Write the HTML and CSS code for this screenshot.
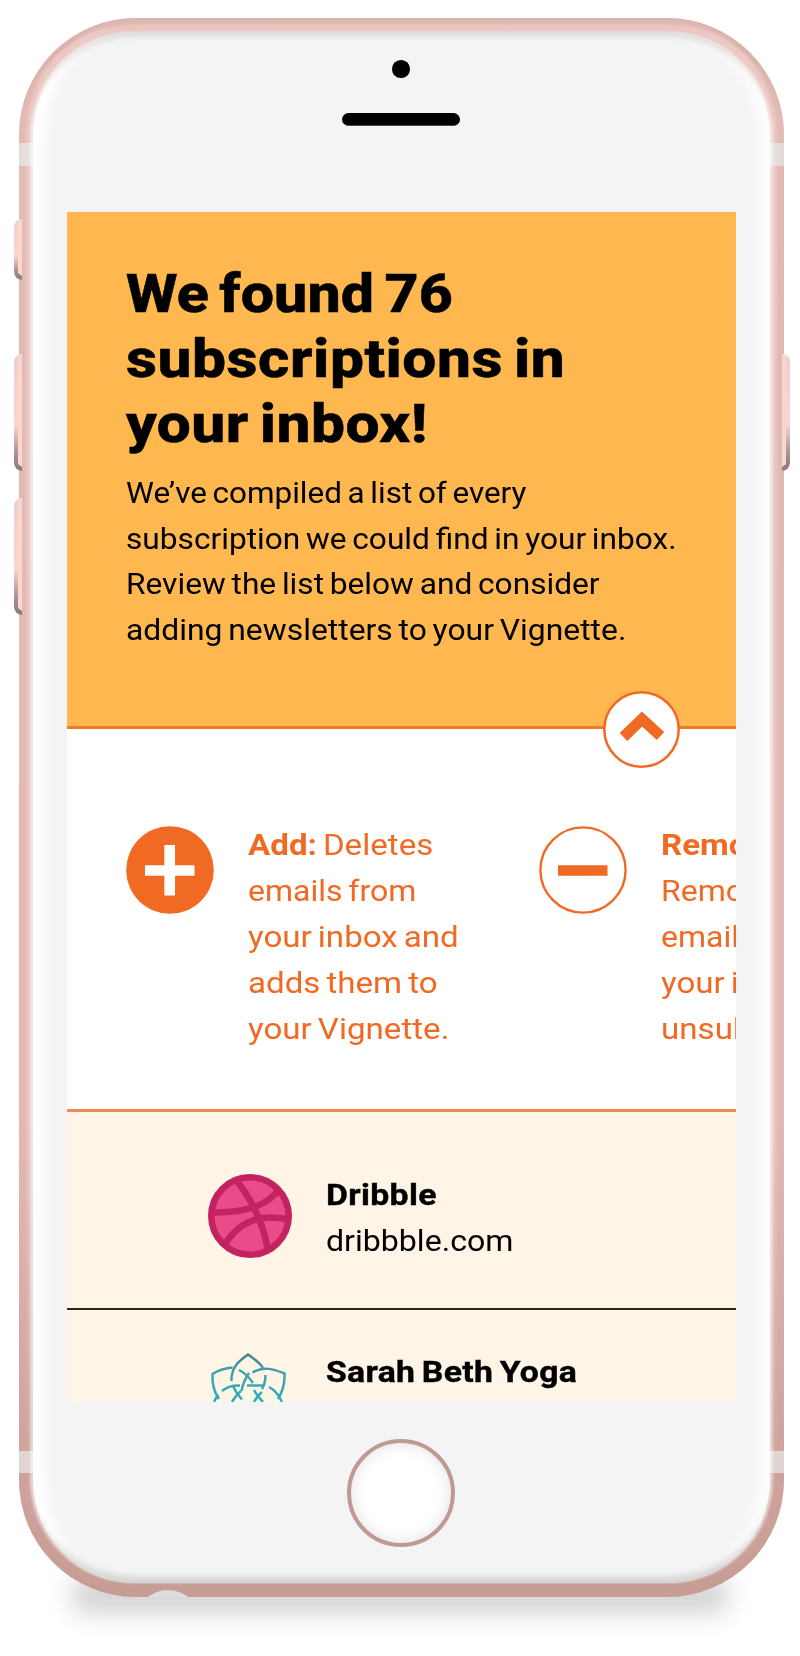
FILE: index.html
```html
<!DOCTYPE html>
<html lang="en">
<head>
<meta charset="utf-8">
<title>Vignette subscriptions</title>
<link rel="stylesheet" href="styles.css">
</head>
<body>
<div class="phone">
  <i class="key key-mute"></i><i class="key key-up"></i><i class="key key-down"></i><i class="key key-power"></i>
  <div class="shell">
    <i class="band band-top"></i><i class="band band-bottom"></i><i class="jack"></i>
    <div class="face">
      <div class="earpiece"><i class="camera"></i><i class="speaker"></i></div>
      <main class="screen">
        <header class="hero">
          <h1><span class="h-a">We found 76</span><span class="h-b">subscriptions in</span><span class="h-c">your inbox!</span></h1>
          <p><span class="p-a">We’ve compiled a list of every</span><span class="p-b">subscription we could find in your inbox.</span><span class="p-c">Review the list below and consider</span><span class="p-d">adding newsletters to your Vignette.</span></p>
          <button class="collapse" aria-label="Collapse">
            <svg width="77" height="77" viewBox="0 0 77 77"><circle cx="38.5" cy="38.5" r="37.2" fill="#fff" stroke="#f16a24" stroke-width="2.5"/><path d="M20.500 46 39 28 57.500 45" fill="none" stroke="#f16a24" stroke-width="11"/></svg>
          </button>
        </header>
        <section class="legend">
          <div class="tool">
            <svg width="88" height="88" viewBox="0 0 88 88"><circle cx="44" cy="44" r="43.800" fill="#f16a24"/><path d="M19 44.500H68.500M43.700 19V69.500" stroke="#fff" stroke-width="10.700"/></svg>
            <p><span class="t-a"><b>Add:</b> Deletes</span><span class="t-b">emails from</span><span class="t-c">your inbox and</span><span class="t-d">adds them to</span><span class="t-e">your Vignette.</span></p>
          </div>
          <div class="tool">
            <svg width="88" height="88" viewBox="0 0 88 88"><circle cx="44" cy="44" r="42.600" fill="#fff" stroke="#f16a24" stroke-width="2.400"/><path d="M19 44.500H68.500" stroke="#f16a24" stroke-width="10.700"/></svg>
            <p><span class="t-a"><b>Remove:</b></span><span class="t-b">Removes</span><span class="t-b">emails from</span><span class="t-d">your inbox and</span><span class="t-e">unsubscribes.</span></p>
          </div>
        </section>
        <section class="list">
          <article class="row">
            <svg class="logo" width="84" height="84" viewBox="0 0 84 84"><circle cx="42" cy="42" r="38.700" fill="#ea4c89"/><g fill="none" stroke="#c32361" stroke-width="6.600"><circle cx="42" cy="42" r="38.700"/><path d="M29 7Q54 39 60 77"/><path d="M5 38.500Q55 39 71 15"/><path d="M16 72Q37 36 81 45.500"/></g></svg>
            <p><b class="n-a">Dribble</b><span class="n-b">dribbble.com</span></p>
          </article>
          <article class="row">
            <svg class="logo lotus" width="84" height="84" viewBox="0 0 84 84">
              <defs><linearGradient id="teal" gradientUnits="userSpaceOnUse" x1="0" y1="0" x2="0" y2="48"><stop offset="0" stop-color="#3f828e"/><stop offset=".45" stop-color="#42a3b2"/><stop offset="1" stop-color="#25b0bb"/></linearGradient></defs>
              <g fill="none" stroke="url(#teal)" stroke-width="2.500"><path d="M23.500 28C23 14 31 8 40 1.500 48 7 52 10 55 15"/><path d="M24.500 14.500C17 15 11 17 4.500 21 4 31 6 39 11 46"/><path d="M44.500 19.500C55 13 66 16 76.500 20.500 77 31 75 38 70 46"/><path d="M31 17Q39 21 45 30"/><path d="M41 20Q35 29 33.500 38"/><path d="M57.500 22Q57.500 30 54 36"/><path d="M14 38Q21 32 32 32.500"/><path d="M39 32.500H56"/><path d="M25 33Q28 40 34 46.500"/><path d="M46 37Q49 43 55 49"/><path d="M61 34Q69 38 74 49"/><path d="M10.500 42Q8 44 6 49"/><path d="M33 38Q29 41 24 49"/><path d="M54 39Q50 42 46 49"/></g>
            </svg>
            <p><b class="n-c">Sarah Beth Yoga</b></p>
          </article>
        </section>
      </main>
      <div class="home"></div>
    </div>
  </div>
</div>
</body>
</html>
```
FILE: styles.css
```css
* { box-sizing: border-box; }
body { margin: 0; height: 1656px; overflow: hidden; background: #fff; font-family: Roboto, "Liberation Sans", sans-serif; color: #000; }
.phone { position: relative; width: 800px; height: 1656px; padding: 18px 16px 59px 19px; }
.phone::before { content: ""; position: absolute; left: 70px; right: 70px; top: 1576px; height: 38px; border-radius: 19px; background: rgba(0, 0, 0, .17); filter: blur(12px); }
.shell { position: relative; height: 1579px; padding: 14px; border-radius: 117px; overflow: hidden;
  background: linear-gradient(#e6c0ba 0, #ebc9c4 16px, #eac6c0 70%, #d2a9a2 90%, #c69c94 100%);
  box-shadow: inset 0 7px 2px -1px rgba(205, 160, 153, .3), inset 8px 0 2px -1px rgba(205, 155, 148, .3), inset -8px 0 2px -1px rgba(205, 155, 148, .3); }
.face { position: relative; height: 1551px; padding: 28px 34px 36px 33px; border-radius: 103px; background: #f4f4f4; display: flex; flex-direction: column; align-items: center;
  box-shadow: inset 0 12px 5px -7px rgba(0, 0, 0, .09), inset 0 -14px 7px -8px rgba(0, 0, 0, .14), inset 26px 0 14px -14px #fff, inset -26px 0 14px -14px #fdfdfd, -3px 0 2px rgba(255, 255, 255, .5), 3px 0 2px rgba(255, 255, 255, .5); }
.band { position: absolute; left: 0; right: 0; height: 23px; background: linear-gradient(90deg, #e5dbd9, #eae5e4 14px, #eae5e4 750px, #e2d7d6); }
.band-top { top: 125px; }
.band-bottom { top: 1433px; height: 22px; background: #e0d5d4; }
.jack { position: absolute; left: 117px; top: 1572px; width: 64px; height: 64px; border-radius: 50%; background: #dcdcdc; }
.key { position: absolute; width: 8px; left: 14px; border-radius: 8px 0 0 8px; background: #fad6d0; overflow: hidden; z-index: 1; }
.key::before { content: ""; position: absolute; inset: 0; border-left: 4px solid transparent; border-radius: inherit; background: linear-gradient(#f1cfca, #fad6d0 60%, #a9918c 85%, #8f7974) border-box; clip-path: polygon(0 0, 50% 0, 50% calc(100% - 7px), 100% calc(100% - 4px), 100% 100%, 0 100%); }
.key-mute { top: 219px; height: 61px; }
.key-up { top: 354px; height: 117px; }
.key-down { top: 498px; height: 117px; }
.key-power { top: 354px; height: 117px; left: 782px; transform: scaleX(-1); }
.earpiece { height: 152px; display: flex; flex-direction: column; align-items: center; gap: 35px; }
.camera { width: 17.5px; height: 17.5px; border-radius: 50%; background: #000; }
.speaker { width: 118px; height: 13.5px; border-radius: 7px; background: #000; border-bottom: 1px solid #444; }
.screen { width: 669px; height: 1190px; overflow: hidden; background: #fff5e6; flex: none; display: flex; flex-direction: column; }
.screen span, .screen b { white-space: nowrap; }
h1, p { margin: 0; }
h1 span, p > span, p > b { display: block; width: max-content; transform-origin: left; }
.hero { position: relative; height: 517px; flex: none; background: #ffb74f; border-bottom: 3px solid #f47a2a; padding: 50px 0 0 59.500px; }
h1 { font-size: 53px; line-height: 64.800px; font-weight: 800; margin-bottom: 14px; word-spacing: -4px; -webkit-text-stroke: .5px #000; }
.h-a { transform: scaleX(1.115); letter-spacing: .1px; }
.h-b { transform: scaleX(1.14); letter-spacing: .45px; }
.h-c { transform: scaleX(1.14); letter-spacing: .4px; }
p { font-size: 30px; line-height: 45.700px; word-spacing: -2px; }
.hero p { line-height: 45.500px; }
.p-a { transform: scaleX(1.048); }
.p-b { transform: scaleX(1.055); }
.p-c { transform: scaleX(1.056); }
.p-d { transform: scaleX(1.062); }
.t-a, .t-c, .t-d, .t-e { transform: scaleX(1.104); }
.t-b { transform: scaleX(1.067); }
.n-a, .n-c { transform: scaleX(1.125); letter-spacing: .3px; -webkit-text-stroke: .4px #000; }
.n-b { transform: scaleX(1.07); }
.collapse { position: absolute; left: 536.500px; top: 479px; padding: 0; border: 0; background: none; line-height: 0; }
.legend { height: 383px; flex: none; padding: 93px 0 0 59px; background: #fff; border-bottom: 3px solid #ee8a57; color: #f16a24; display: flex; gap: 79px; }
.tool { display: flex; gap: 34.500px; flex: none; }
.tool:first-child { width: 334.500px; }
.tool + .tool { gap: 34px; }
.tool svg { margin-top: 4px; flex: none; }
.tool p { line-height: 46px; }
.row { height: 197.500px; border-bottom: 2.500px solid #282521; padding: 60px 0 0 141px; display: flex; gap: 34px; }
.row + .row { padding-top: 39px; }
.logo { margin-top: 2px; flex: none; }
.lotus { margin-top: 4px; }
.home { width: 108px; height: 108px; flex: none; margin-top: 37px; border: 4px solid #c09a92; border-radius: 50%; background: #fff; box-shadow: inset 0 0 16px rgba(0, 0, 0, .12); }
```
